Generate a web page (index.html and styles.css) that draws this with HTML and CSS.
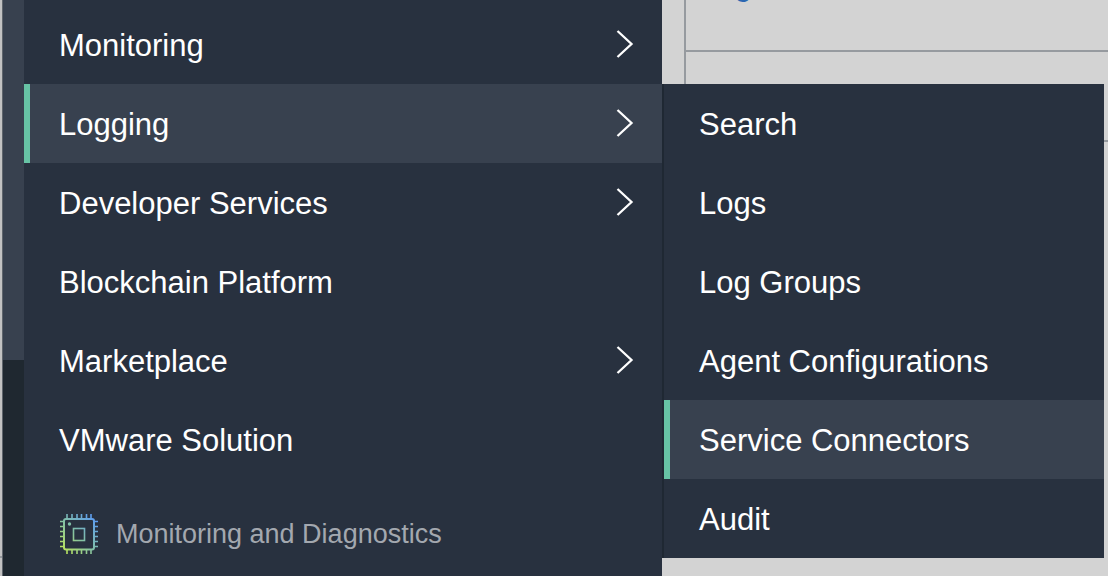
FILE: index.html
```html
<!DOCTYPE html>
<html lang="en">
<head>
<meta charset="utf-8">
<title>Navigation</title>
<link rel="stylesheet" href="styles.css">
</head>
<body>
<div class="shell">
  <div class="gutter"><div class="gutter-row"></div></div>
  <div class="scroll-track"><div class="scroll-thumb"></div></div>
  <nav class="menu" aria-label="Services">
    <ul class="list">
      <li class="item"><a class="link" href="#">Monitoring<svg class="chevron" viewBox="0 0 18 30" aria-hidden="true"><path d="M1.500 2 15.500 15 1.500 28"/></svg></a></li>
      <li class="item"><a class="link active" href="#">Logging<svg class="chevron" viewBox="0 0 18 30" aria-hidden="true"><path d="M1.500 2 15.500 15 1.500 28"/></svg></a>
        <ul class="list submenu">
          <li class="item"><a class="link" href="#">Search</a></li>
          <li class="item"><a class="link" href="#">Logs</a></li>
          <li class="item"><a class="link" href="#">Log Groups</a></li>
          <li class="item"><a class="link" href="#">Agent Configurations</a></li>
          <li class="item"><a class="link active" href="#">Service Connectors</a></li>
          <li class="item"><a class="link" href="#">Audit</a></li>
        </ul>
      </li>
      <li class="item"><a class="link" href="#">Developer Services<svg class="chevron" viewBox="0 0 18 30" aria-hidden="true"><path d="M1.500 2 15.500 15 1.500 28"/></svg></a></li>
      <li class="item"><a class="link" href="#">Blockchain Platform</a></li>
      <li class="item"><a class="link" href="#">Marketplace<svg class="chevron" viewBox="0 0 18 30" aria-hidden="true"><path d="M1.500 2 15.500 15 1.500 28"/></svg></a></li>
      <li class="item"><a class="link" href="#">VMware Solution</a></li>
    </ul>
    <h2 class="section">
      <svg class="chip" viewBox="0 0 38 40" aria-hidden="true">
        <defs>
          <linearGradient id="chip-fill" gradientUnits="userSpaceOnUse" x1="3" y1="37" x2="35" y2="5">
            <stop offset="0" stop-color="#b9e35c"/>
            <stop offset=".5" stop-color="#82bfa8"/>
            <stop offset="1" stop-color="#5d9df0"/>
          </linearGradient>
        </defs>
        <g fill="none" stroke="url(#chip-fill)">
          <rect x="4" y="5" width="30" height="30.5" rx="2" stroke-width="2"/>
          <rect x="13.500" y="14.500" width="11" height="12" stroke-width="1.6"/>
          <path stroke-width="1.6" d="M7 0v5M12 0v5M17 0v5M21.500 0v5M26.500 0v5M31 0v5M7 35v5M12 35v5M17 35v5M21.500 35v5M26.500 35v5M31 35v5M0 7.500h4M0 12.500h4M0 17.500h4M0 22.500h4M0 27.500h4M0 32.500h4M34 7.500h4M34 12.500h4M34 17.500h4M34 22.500h4M34 27.500h4M34 32.500h4"/>
        </g>
        <circle cx="9.500" cy="10" r="1.700" fill="#82bfa8"/>
      </svg>
      Monitoring and Diagnostics
    </h2>
  </nav>
  <main class="content">
    <table class="results">
      <tbody>
        <tr><td class="cell"><a class="result-link" href="#">Logs</a></td></tr>
        <tr><td class="cell"></td></tr>
      </tbody>
    </table>
  </main>
</div>
</body>
</html>
```
FILE: styles.css
```css
* {
  box-sizing: border-box;
}

body {
  margin: 0;
  background: #d3d3d3;
  font-family: "Liberation Sans", Arial, Helvetica, sans-serif;
}

.shell {
  display: flex;
  height: 100vh;
  overflow: hidden;
}

.gutter {
  display: flex;
  flex: none;
  flex-direction: column;
  justify-content: flex-end;
  width: 3px;
  background: #c2c2c2;
  border-right: 1px solid #5f656c;
}

.gutter-row {
  height: 20px;
  border-top: 2px solid #969a9f;
}

.scroll-track {
  flex: none;
  width: 21px;
  background: #1f2830;
}

.scroll-thumb {
  height: 360px;
  background: #38414f;
}

.menu {
  position: relative;
  z-index: 1;
  flex: none;
  width: 638px;
  padding-top: 5px;
  background: #28313f;
}

.list {
  margin: 0;
  padding: 0;
  list-style: none;
}

.item {
  position: relative;
}

.link {
  display: flex;
  align-items: center;
  justify-content: space-between;
  height: 79px;
  padding: 2px 28px 0 29px;
  border-left: 6px solid transparent;
  color: #fff;
  font-size: 31px;
  text-decoration: none;
}

.active {
  border-left-color: #67c3a5;
  background: #38414f;
}

.chevron {
  width: 18px;
  height: 30px;
  margin-bottom: 4px;
  fill: none;
  stroke: #fff;
  stroke-width: 2.3;
}

.submenu {
  position: absolute;
  top: 0;
  left: 100%;
  width: 442px;
  border-left: 2px solid #1f2833;
  background: #28313f;
}

.section {
  display: flex;
  align-items: center;
  gap: 18px;
  margin: 0;
  padding: 35px 36px;
  color: #a3a8af;
  font-size: 27px;
  font-weight: 400;
  line-height: 40px;
}

.chip {
  flex: none;
  width: 38px;
  height: 40px;
}

.content {
  flex: 1;
  padding-left: 22px;
}

.results {
  width: 100%;
  margin-top: -38px;
  border-left: 2px solid #969a9f;
  border-spacing: 0;
}

.cell {
  height: 90px;
  padding: 5px 14px;
  border-bottom: 2px solid #969a9f;
  vertical-align: top;
}

.result-link {
  color: #2b67b1;
  font-size: 31px;
  text-decoration: none;
}
```
